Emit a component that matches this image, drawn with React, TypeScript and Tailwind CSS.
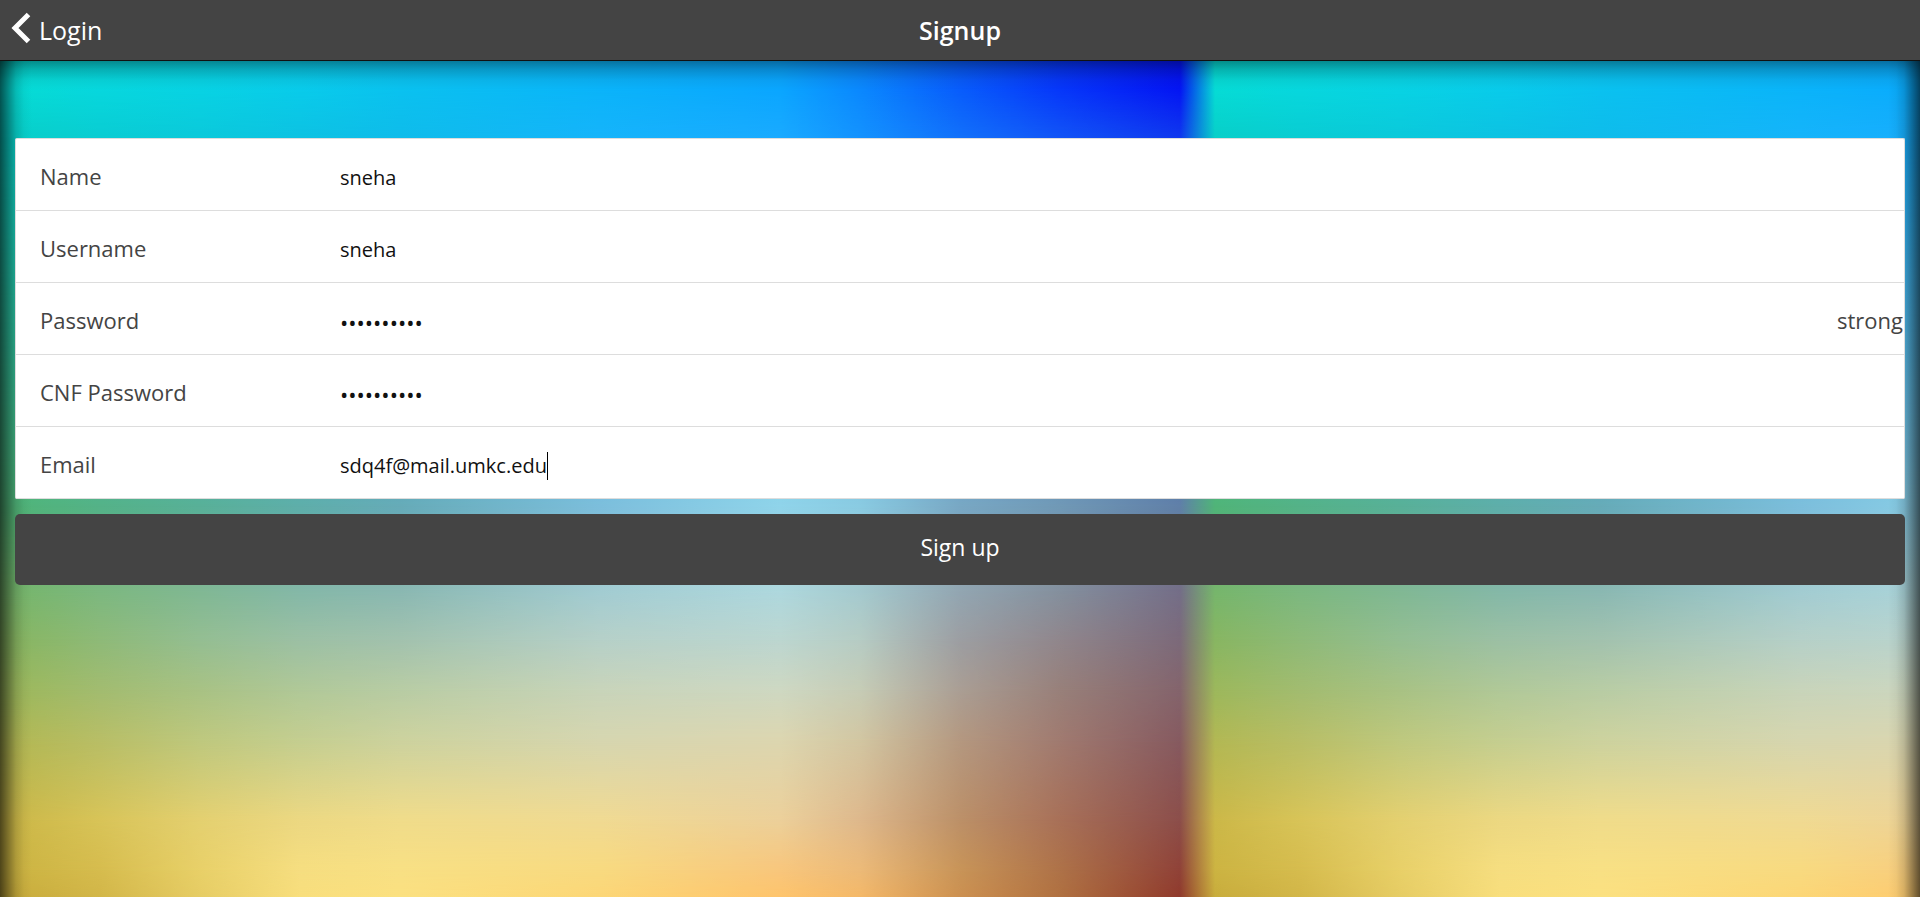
import React from "react";

type ColorRow = { y: number; colors: string[] };

// Horizontal stops inside one wallpaper tile, in pixels.
const TILE = 1200;
const STOPS = [15, 100, 200, 300, 400, 600, 780, 860, 960, 1060, 1180];

const ROWS: ColorRow[] = [
  { y: 88, colors: ["#06dcd6", "#07d8de", "#08d3e4", "#09cceb", "#0ac2f0", "#0ab4fa", "#0aa6ff", "#0a88fe", "#085cfc", "#0636fa", "#0414f4"] },
  { y: 137, colors: ["#08cfc8", "#0accd2", "#0bc9da", "#0dc2e2", "#0fbcea", "#16b4fa", "#1aaaff", "#1492fe", "#1270fa", "#1254f6", "#1038ee"] },
  { y: 506, colors: ["#50b478", "#54b288", "#58b098", "#5eaeaa", "#66abb8", "#7cbedc", "#90d4ea", "#8acbe2", "#78a8c4", "#7099b6", "#6080a8"] },
  { y: 590, colors: ["#76b66c", "#7cb880", "#80b894", "#84b8a8", "#8ab8b2", "#a2ccd2", "#aed8de", "#a4cacf", "#92a6b2", "#84909e", "#746e88"] },
  { y: 640, colors: ["#88b662", "#8eba78", "#94be92", "#9cc0a4", "#a2c2ae", "#b6d0c8", "#bcd6d0", "#b6ccc4", "#9c9ea2", "#90868c", "#7c6a7a"] },
  { y: 690, colors: ["#9cb85c", "#a2bc70", "#a8c284", "#b0c898", "#b8cca4", "#c8d4ba", "#ced8c2", "#c6ccb6", "#aa9e94", "#98807a", "#84646c"] },
  { y: 740, colors: ["#b2b854", "#b8be66", "#bec87e", "#c4ce90", "#ccd29e", "#d6d6b0", "#dcd6b0", "#d2c6a2", "#b49880", "#a07a70", "#865a60"] },
  { y: 820, colors: ["#ccb848", "#d8c458", "#e4d070", "#ecd882", "#f0dc8a", "#f0da92", "#ecd09a", "#deb88c", "#bc9068", "#a87058", "#8c4e4a"] },
  { y: 870, colors: ["#ccb442", "#d6bc4e", "#e8d068", "#f6de80", "#f8e084", "#f8da80", "#f8c67c", "#ecba78", "#c89458", "#ae7248", "#904238"] },
  { y: 897, colors: ["#c8ac3c", "#d2b648", "#e6cc64", "#f8de7c", "#fbe080", "#fcd676", "#fec46c", "#f4b868", "#cc9050", "#b07040", "#903a2c"] },
];

function rowGradient(colors: string[]) {
  const parts: string[] = [];
  for (let tile = 0; tile < 4; tile++) {
    colors.forEach((color, i) => parts.push(`${color} ${tile * TILE + STOPS[i]}px`));
  }
  return `linear-gradient(to right, ${parts.join(", ")})`;
}

function Wallpaper() {
  return (
    <div aria-hidden="true" className="isolate grid [grid-area:1/1]">
      {ROWS.map((row, i) => {
        const mask =
          i === 0 ? undefined : `linear-gradient(to bottom, transparent ${ROWS[i - 1].y}px, black ${row.y}px)`;
        return (
          <div
            key={row.y}
            className="[grid-area:1/1]"
            style={{ backgroundImage: rowGradient(row.colors), maskImage: mask, WebkitMaskImage: mask }}
          />
        );
      })}
      <div className="z-10 [grid-area:1/1] bg-[linear-gradient(to_bottom,rgba(0,0,0,.36)_61px,rgba(0,0,0,.18)_70px,rgba(0,0,0,.05)_80px,transparent_90px)]" />
      <div className="z-10 [grid-area:1/1] bg-[linear-gradient(to_right,rgba(0,0,0,.62),rgba(0,0,0,.38)_8px,rgba(0,0,0,.15)_16px,rgba(0,0,0,.04)_24px,transparent_32px)]" />
      <div className="z-10 [grid-area:1/1] bg-[linear-gradient(to_left,rgba(0,0,0,.62),rgba(0,0,0,.38)_8px,rgba(0,0,0,.15)_16px,rgba(0,0,0,.04)_24px,transparent_32px)]" />
    </div>
  );
}

type FieldProps = {
  id: string;
  label: string;
  type?: "text" | "password";
  value: string;
  note?: string;
  active?: boolean;
};

function Field({ id, label, type = "text", value, note, active }: FieldProps) {
  return (
    <div className="flex h-18 items-center border-b border-[#ddd] pt-0.5 pl-6">
      <label htmlFor={id} className="w-[300px] shrink-0 text-[22px] leading-8 text-[#444]">
        {label}
      </label>
      <div className="flex min-w-0 flex-1 items-center pt-1">
        <input
          id={id}
          type={type}
          defaultValue={value}
          className={`bg-transparent leading-7 text-[#111] outline-none ${active ? "field-sizing-content" : "w-full"} ${
            type === "password" ? "text-[22px]" : "text-[20px]"
          }`}
        />
        {active && <span aria-hidden="true" className="h-7 w-px bg-black" />}
      </div>
      {note && <span className="pr-px text-[22px] leading-8 text-[#444]">{note}</span>}
    </div>
  );
}

export default function App() {
  return (
    <div className="grid min-h-screen font-['Open_Sans','Noto_Sans',sans-serif]">
      <Wallpaper />
      <div className="z-10 flex flex-col [grid-area:1/1]">
        <header className="grid h-[61px] grid-cols-3 items-center border-b border-[#111] bg-[#444] text-white">
          <a href="#login" className="flex items-center gap-[7px] justify-self-start pl-2 text-[25px] leading-8">
            <svg viewBox="0 0 24 32" className="-mt-1 h-8 w-6" fill="none" stroke="currentColor" strokeWidth="5" strokeLinejoin="miter">
              <path d="M20.5 2.5 7 16l13.500 13.500" />
            </svg>
            Login
          </a>
          <h1 className="text-center text-[25px] leading-8 font-semibold">Signup</h1>
        </header>
        <main className="px-[15px] pt-[77px]">
          <form className="flex flex-col gap-[15px]" onSubmit={(e) => e.preventDefault()}>
            <div className="rounded-[2px] border border-b-0 border-[#ddd] bg-white">
              <Field id="name" label="Name" value="sneha" />
              <Field id="username" label="Username" value="sneha" />
              <Field id="password" label="Password" type="password" value="sneha12345" note="strong" />
              <Field id="confirm" label="CNF Password" type="password" value="sneha12345" />
              <Field id="email" label="Email" value="sdq4f@mail.umkc.edu" active />
            </div>
            <button type="submit" className="h-[71px] rounded-[5px] bg-[#444] pb-1 text-[23px] text-white">
              Sign up
            </button>
          </form>
        </main>
      </div>
    </div>
  );
}
